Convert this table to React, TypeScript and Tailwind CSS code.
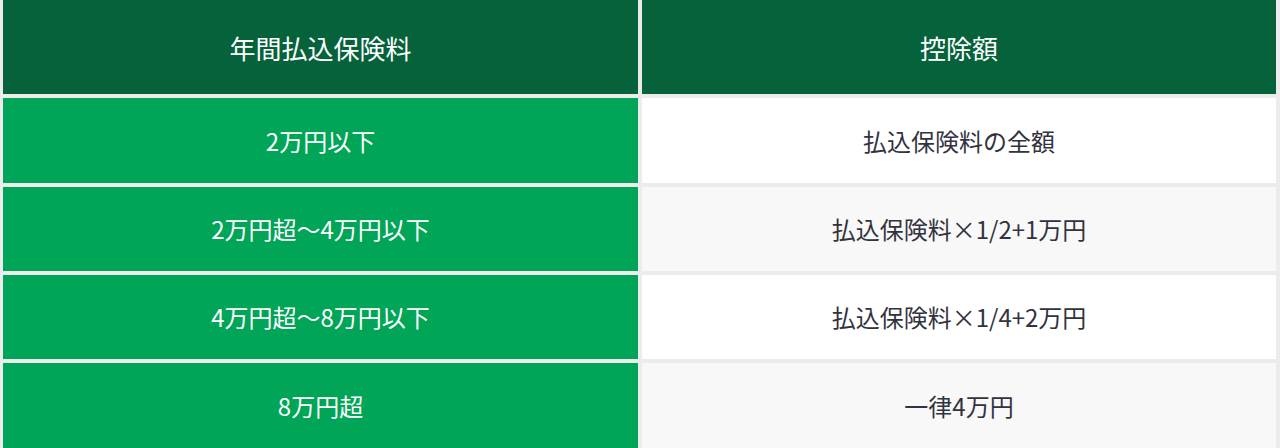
import React from "react";

const rows = [
  ["2万円以下", "払込保険料の全額", "h-[85px]"],
  ["2万円超〜4万円以下", "払込保険料×1/2+1万円", "h-[84px]"],
  ["4万円超〜8万円以下", "払込保険料×1/4+2万円", "h-[84px]"],
  ["8万円超", "一律4万円", "h-[85px]"],
];

export default function App() {
  return (
    <div
      className="w-[1280px] h-[448px] overflow-hidden bg-[#ececec] pl-[3px] pr-[4px]"
      style={{ fontFamily: '"Noto Sans CJK JP", "Noto Sans", sans-serif' }}
    >
      <div className="grid grid-cols-[635px_634px] gap-x-[4px] gap-y-[4px]">
        <div className="h-[94px] bg-[#05623a] text-white text-[26px] flex items-center justify-center">
          年間払込保険料
        </div>
        <div className="h-[94px] bg-[#05623a] text-white text-[26px] flex items-center justify-center">
          控除額
        </div>
        {rows.map(([a, b, h], i) => (
          <React.Fragment key={i}>
            <div className={`${h} bg-[#00a557] text-white text-[24px] flex items-center justify-center`}>
              {a}
            </div>
            <div
              className={`${h} ${i % 2 === 0 ? "bg-white" : "bg-[#f8f8f8]"} text-[#333340] text-[24px] flex items-center justify-center`}
            >
              {b}
            </div>
          </React.Fragment>
        ))}
      </div>
    </div>
  );
}
